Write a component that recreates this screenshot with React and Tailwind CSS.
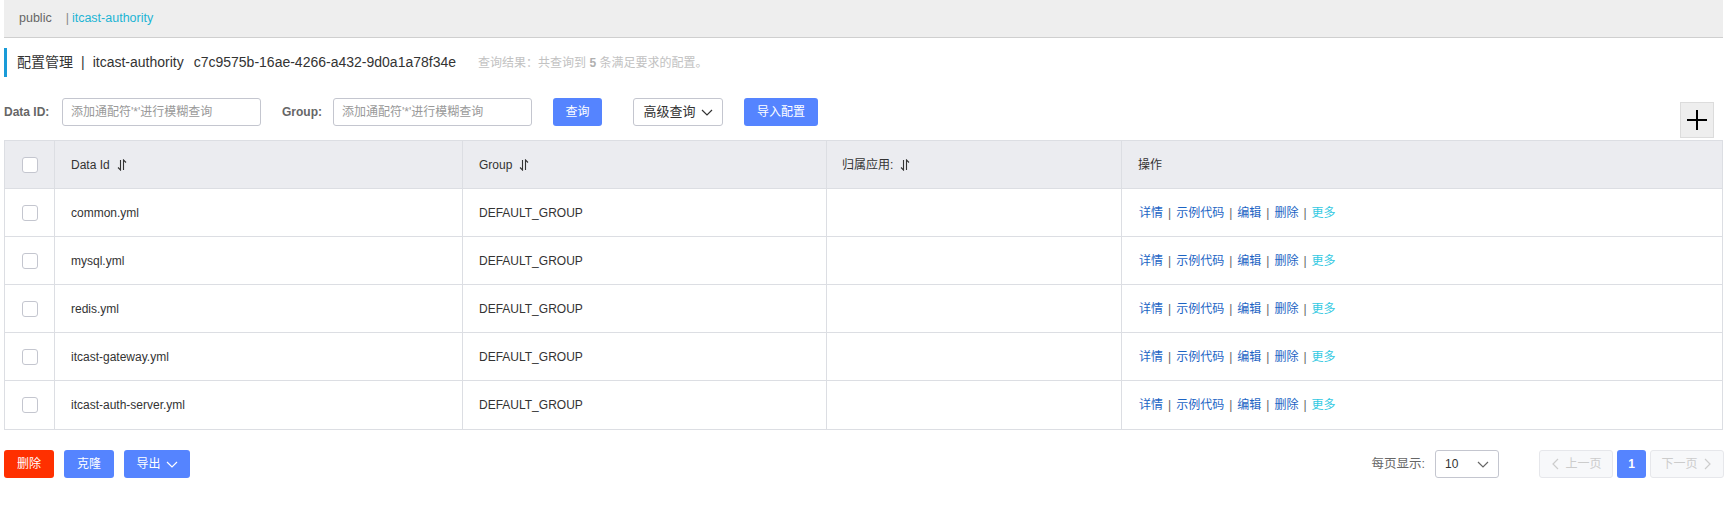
import React from "react";

const rows = [
  "common.yml",
  "mysql.yml",
  "redis.yml",
  "itcast-gateway.yml",
  "itcast-auth-server.yml",
];

const GRID = "grid grid-cols-[50px_408px_364px_295px_1fr]";

function Chevron({ dir = "down", className = "" }) {
  const pts = {
    down: "1,4 6,9 11,4",
    left: "8,1 3,6 8,11",
    right: "4,1 9,6 4,11",
  }[dir];
  return (
    <svg viewBox="0 0 12 12" className={className} fill="none" stroke="currentColor" strokeWidth="1.2">
      <polyline points={pts} />
    </svg>
  );
}

function SortIcon() {
  return (
    <svg viewBox="0 0 10 12" className="ml-[7px] h-[12px] w-[10px] text-[#333]" fill="none" stroke="currentColor" strokeWidth="1.1">
      <path d="M3.5 1v10L1 8.5" />
      <path d="M6.5 11V1L9 3.5" />
    </svg>
  );
}

function Checkbox() {
  return <span className="block h-[16px] w-[16px] rounded-[3px] border border-[#c4c6cf] bg-white" />;
}

function Sep() {
  return <span className="mx-[5px] text-[#666]">|</span>;
}

export default function App() {
  return (
    <div className="w-[1724px] h-[513px] bg-white pl-[4px] pr-[1px] text-[12px] text-[#333] [font-family:'Liberation_Sans','Noto_Sans_CJK_SC',sans-serif]">
      {/* breadcrumb bar */}
      <div className="flex h-[38px] items-center border-b border-[#cfcfcf] bg-[#eeeeee] pl-[15px] text-[12.5px]">
        <span className="text-[#666]">public</span>
        <span className="ml-[14px] text-[#888]">|</span>
        <span className="ml-[3px] text-[#1cb4d4]">itcast-authority</span>
      </div>

      {/* title */}
      <div className="mt-[10px] flex h-[29px] items-center border-l-[3px] border-[#1a9bd8] pl-[10px]">
        <span className="text-[14px] text-[#333]">配置管理</span>
        <span className="mx-[8px] text-[14px] text-[#333]">|</span>
        <span className="text-[14px] text-[#333]">itcast-authority</span>
        <span className="ml-[10px] text-[14px] text-[#333]">c7c9575b-16ae-4266-a432-9d0a1a78f34e</span>
        <span className="ml-[22px] text-[12px] text-[#c2c2c2]">
          查询结果：共查询到 <strong className="font-bold text-[#b0b0b0]">5</strong> 条满足要求的配置。
        </span>
      </div>

      {/* search row */}
      <div className="mt-[21px] flex items-start">
        <div className="flex h-[28px] items-center">
          <span className="w-[58px] font-bold text-[#666]">Data ID:</span>
          <div className="flex h-[28px] w-[199px] items-center rounded-[3px] border border-[#c4c6cf] pl-[8px] text-[#999]">
            添加通配符'*'进行模糊查询
          </div>
          <span className="ml-[21px] w-[51px] font-bold text-[#666]">Group:</span>
          <div className="flex h-[28px] w-[199px] items-center rounded-[3px] border border-[#c4c6cf] pl-[8px] text-[#999]">
            添加通配符'*'进行模糊查询
          </div>
          <button className="ml-[21px] flex h-[28px] w-[49px] items-center justify-center rounded-[3px] bg-[#5584ff] text-white">
            查询
          </button>
          <button className="ml-[31px] flex h-[28px] w-[90px] items-center justify-center gap-[5px] rounded-[3px] border border-[#c4c6cf] bg-white text-[13px] text-[#333]">
            高级查询
            <Chevron className="h-[12px] w-[12px]" />
          </button>
          <button className="ml-[21px] flex h-[28px] w-[74px] items-center justify-center rounded-[3px] bg-[#5584ff] text-white">
            导入配置
          </button>
        </div>
        <button className="ml-auto mr-[9px] mt-[4px] flex h-[36px] w-[34px] items-center justify-center border border-[#dcdcdc] bg-[#eeeeee]">
          <svg viewBox="0 0 20 20" className="h-[20px] w-[20px]" stroke="#000" strokeWidth="2">
            <path d="M10 0v20M0 10h20" />
          </svg>
        </button>
      </div>

      {/* table */}
      <div className="mt-[2px] border border-[#dcdee3]">
        <div className={`${GRID} h-[48px] border-b border-[#dcdee3] bg-[#ebecf0]`}>
          <div className="flex items-center justify-center border-r border-[#dcdee3]">
            <Checkbox />
          </div>
          <div className="flex items-center border-r border-[#dcdee3] pl-[16px]">
            Data Id <SortIcon />
          </div>
          <div className="flex items-center border-r border-[#dcdee3] pl-[16px]">
            Group <SortIcon />
          </div>
          <div className="flex items-center border-r border-[#dcdee3] pl-[15px]">
            归属应用: <SortIcon />
          </div>
          <div className="flex items-center pl-[16px]">操作</div>
        </div>
        {rows.map((name, i) => (
          <div
            key={name}
            className={`${GRID} h-[48px] ${i < rows.length - 1 ? "border-b" : ""} border-[#dcdee3] bg-white`}
          >
            <div className="flex items-center justify-center border-r border-[#dcdee3]">
              <Checkbox />
            </div>
            <div className="flex items-center border-r border-[#dcdee3] pl-[16px]">{name}</div>
            <div className="flex items-center border-r border-[#dcdee3] pl-[16px]">DEFAULT_GROUP</div>
            <div className="border-r border-[#dcdee3]" />
            <div className="flex items-center pl-[17px] text-[#1c64c4]">
              <span>详情</span>
              <Sep />
              <span>示例代码</span>
              <Sep />
              <span>编辑</span>
              <Sep />
              <span>删除</span>
              <Sep />
              <span className="text-[#33c9e2]">更多</span>
            </div>
          </div>
        ))}
      </div>

      {/* footer */}
      <div className="mt-[20px] flex h-[28px] items-center">
        <button className="flex h-[28px] w-[50px] items-center justify-center rounded-[3px] bg-[#ff3000] text-white">
          删除
        </button>
        <button className="ml-[10px] flex h-[28px] w-[50px] items-center justify-center rounded-[3px] bg-[#5584ff] text-white">
          克隆
        </button>
        <button className="ml-[10px] flex h-[28px] w-[66px] items-center justify-center gap-[5px] rounded-[3px] bg-[#5584ff] text-white">
          导出
          <Chevron className="h-[12px] w-[12px]" />
        </button>

        <span className="ml-auto text-[12.5px] text-[#666]">每页显示:</span>
        <div className="ml-[10px] flex h-[28px] w-[64px] items-center justify-between rounded-[3px] border border-[#c4c6cf] pl-[9px] pr-[9px] text-[#333]">
          <span>10</span>
          <Chevron className="h-[12px] w-[12px] text-[#666]" />
        </div>
        <button className="ml-[40px] flex h-[28px] w-[74px] items-center justify-center gap-[3px] rounded-[3px] border border-[#e6e7eb] bg-[#f7f8fa] text-[#ccc]">
          <Chevron dir="left" className="h-[12px] w-[12px]" />
          上一页
        </button>
        <button className="ml-[4px] flex h-[28px] w-[29px] items-center justify-center rounded-[3px] bg-[#5584ff] font-bold text-white">
          1
        </button>
        <button className="ml-[4px] mr-[-1px] flex h-[28px] w-[74px] items-center justify-center gap-[3px] rounded-[3px] border border-[#e6e7eb] bg-[#f7f8fa] text-[#ccc]">
          下一页
          <Chevron dir="right" className="h-[12px] w-[12px]" />
        </button>
      </div>
    </div>
  );
}
